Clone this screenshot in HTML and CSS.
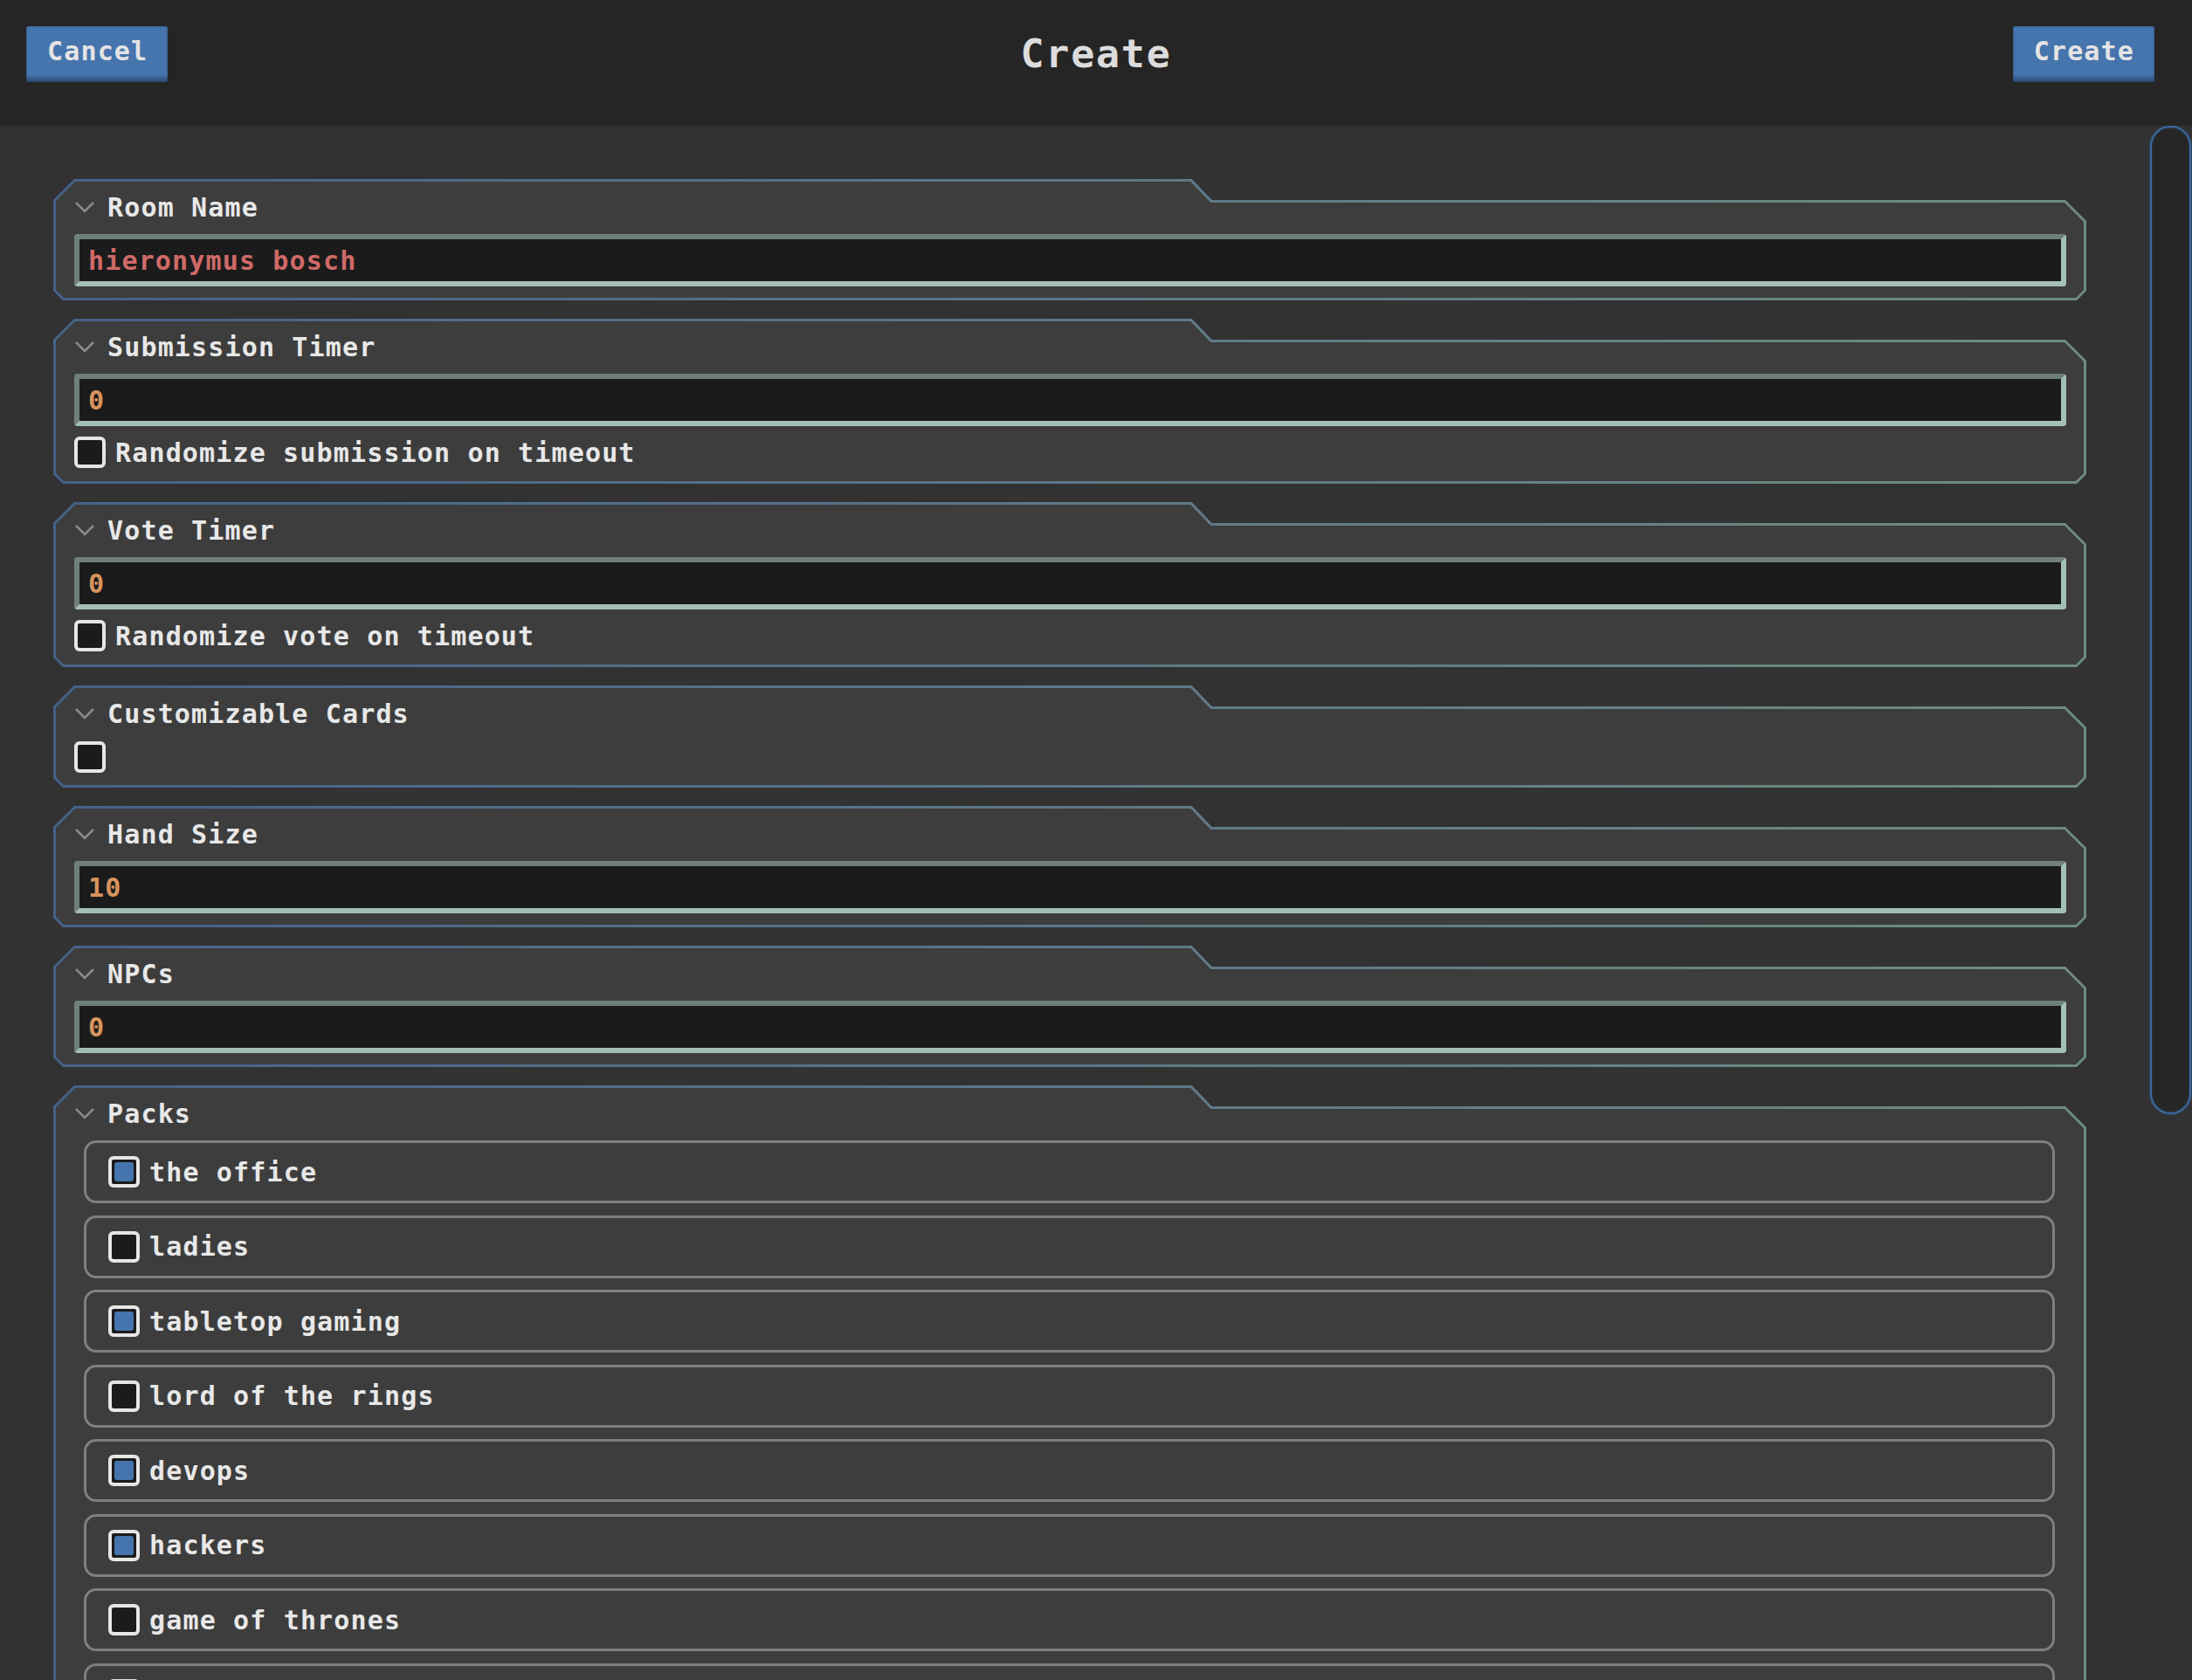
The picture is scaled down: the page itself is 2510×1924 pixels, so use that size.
FILE: index.html
```html
<!DOCTYPE html>
<html lang="en">
<head>
<meta charset="utf-8">
<title>Create</title>
<link rel="stylesheet" href="styles.css">
</head>
<body>
<header class="topbar">
  <button class="btn btn-cancel">Cancel</button>
  <h1 class="title">Create</h1>
  <button class="btn btn-create">Create</button>
</header>
<div class="main">
  <div class="content">
    <section class="card">
      <div class="card-body">
        <div class="card-head"><svg class="chev" viewBox="0 0 24 14"><polyline points="2,2 12,12 22,2"/></svg><span>Room Name</span></div>
        <input class="field field-text" type="text" value="hieronymus bosch">
      </div>
    </section>
    <section class="card">
      <div class="card-body">
        <div class="card-head"><svg class="chev" viewBox="0 0 24 14"><polyline points="2,2 12,12 22,2"/></svg><span>Submission Timer</span></div>
        <input class="field field-num" type="text" value="0">
        <label class="check"><span class="box"></span><span>Randomize submission on timeout</span></label>
      </div>
    </section>
    <section class="card">
      <div class="card-body">
        <div class="card-head"><svg class="chev" viewBox="0 0 24 14"><polyline points="2,2 12,12 22,2"/></svg><span>Vote Timer</span></div>
        <input class="field field-num" type="text" value="0">
        <label class="check"><span class="box"></span><span>Randomize vote on timeout</span></label>
      </div>
    </section>
    <section class="card">
      <div class="card-body">
        <div class="card-head"><svg class="chev" viewBox="0 0 24 14"><polyline points="2,2 12,12 22,2"/></svg><span>Customizable Cards</span></div>
        <label class="check check-solo"><span class="box"></span></label>
      </div>
    </section>
    <section class="card">
      <div class="card-body">
        <div class="card-head"><svg class="chev" viewBox="0 0 24 14"><polyline points="2,2 12,12 22,2"/></svg><span>Hand Size</span></div>
        <input class="field field-num" type="text" value="10">
      </div>
    </section>
    <section class="card">
      <div class="card-body">
        <div class="card-head"><svg class="chev" viewBox="0 0 24 14"><polyline points="2,2 12,12 22,2"/></svg><span>NPCs</span></div>
        <input class="field field-num" type="text" value="0">
      </div>
    </section>
    <section class="card">
      <div class="card-body">
        <div class="card-head"><svg class="chev" viewBox="0 0 24 14"><polyline points="2,2 12,12 22,2"/></svg><span>Packs</span></div>
        <div class="packs">
          <label class="pack"><span class="box on"></span><span>the office</span></label>
          <label class="pack"><span class="box"></span><span>ladies</span></label>
          <label class="pack"><span class="box on"></span><span>tabletop gaming</span></label>
          <label class="pack"><span class="box"></span><span>lord of the rings</span></label>
          <label class="pack"><span class="box on"></span><span>devops</span></label>
          <label class="pack"><span class="box on"></span><span>hackers</span></label>
          <label class="pack"><span class="box"></span><span>game of thrones</span></label>
          <label class="pack"><span class="box"></span><span>star wars</span></label>
        </div>
      </div>
    </section>
  </div>
  <div class="scroll-track"><div class="scroll-thumb"></div></div>
</div>
</body>
</html>
```
FILE: styles.css
```css
* { box-sizing: border-box; }
html, body { margin: 0; height: 100%; }
body {
  background: #323232;
  color: #e6e6e6;
  font-family: "DejaVu Sans Mono", monospace;
  overflow: hidden;
}

.topbar {
  height: 144px;
  background: #252525;
  display: grid;
  grid-template-columns: 1fr auto 1fr;
  align-items: start;
  padding: 30px 30px 0;
}
.btn {
  height: 64px;
  padding: 0 23px 6px 24px;
  background: #4674ad;
  color: #e4e4e4;
  border: none;
  border-radius: 2px;
  font-family: "DejaVu Sans Mono", monospace;
  font-weight: bold;
  font-size: 30px;
  letter-spacing: 1.15px;
  line-height: 1;
  box-shadow: inset 0 -7px 4px -2px rgba(0,0,0,0.3), inset 0 0 2px rgba(0,0,0,0.35);
  display: flex;
  align-items: center;
}
.btn-cancel { justify-self: start; }
.btn-create { justify-self: end; margin-right: 13px; }
.title {
  margin: 0;
  height: 62px;
  display: flex;
  align-items: center;
  font-size: 45px;
  font-weight: bold;
  letter-spacing: 1.75px;
  color: #dcdcdc;
}

.main { display: flex; height: 1780px; overflow: hidden; }
.content {
  flex: 1;
  min-width: 0;
  padding: 61px 61px 0;
  display: flex;
  flex-direction: column;
  gap: 21px;
}
.scroll-track { width: 60px; flex-shrink: 0; padding-left: 12px; }
.scroll-thumb {
  width: 47px;
  height: 1132px;
  border: 2px solid #3b6aa5;
  border-radius: 24px;
  background: #262626;
  box-shadow: 0 0 3px rgba(70,116,173,0.6), inset 0 0 3px rgba(70,116,173,0.4);
}

.card {
  flex-shrink: 0;
  padding: 3px;
  background: linear-gradient(90deg, #45628a 0%, #5d7788 50%, #6f8c80 100%);
  clip-path: polygon(0 24px, 24px 0, 56% 0, calc(56% + 23px) 24px, calc(100% - 24px) 24px, 100% 48px, 100% calc(100% - 11px), calc(100% - 11px) 100%, 11px 100%, 0 calc(100% - 11px));
}
.card-body {
  background: #3d3d3d;
  clip-path: polygon(0 22px, 22px 0, calc(56% - 1px) 0, calc(56% + 22px) 24px, calc(100% - 22px) 24px, 100% 46px, 100% calc(100% - 9px), calc(100% - 9px) 100%, 9px 100%, 0 calc(100% - 9px));
  padding: 9px 20px 13px 21px;
  display: flex;
  flex-direction: column;
  gap: 10px;
}
.card-head {
  display: flex;
  align-items: center;
  gap: 14px;
  height: 40px;
  margin-bottom: 1px;
  font-size: 30px;
  font-weight: bold;
  letter-spacing: 1.15px;
  color: #e8e8e8;
}
.chev { width: 24px; height: 14px; flex-shrink: 0; }
.chev polyline { fill: none; stroke: #8a8a8a; stroke-width: 2.5; }

.field {
  display: block;
  width: 100%;
  height: 60px;
  margin: 0;
  border: 6px solid;
  border-color: #6f8079 #a3c0b4 #a3c0b4 #6f8079;
  border-radius: 4px;
  background: #1b1b1b;
  padding: 0 10px;
  font-family: "DejaVu Sans Mono", monospace;
  font-size: 30px;
  font-weight: bold;
  letter-spacing: 1.15px;
  outline: none;
}
.field-text { color: #cf6a68; }
.field-num { color: #d8945e; }

.check {
  display: flex;
  align-items: center;
  gap: 11px;
  height: 40px;
  font-size: 30px;
  font-weight: bold;
  letter-spacing: 1.15px;
  color: #e8e8e8;
}
.check-solo { height: 38px; }
.box {
  width: 36px;
  height: 36px;
  flex-shrink: 0;
  border: 4px solid #e6e6e6;
  border-radius: 6px;
  background: #1b1b1b;
  display: flex;
  align-items: center;
  justify-content: center;
}
.box.on::after {
  content: "";
  width: 22px;
  height: 22px;
  border-radius: 3px;
  background: #4674ad;
}

.packs {
  display: flex;
  flex-direction: column;
  gap: 13.5px;
  margin: 0 13px 0 11px;
}
.pack {
  height: 72px;
  flex-shrink: 0;
  border: 3px solid #7f7f7f;
  border-radius: 14px;
  display: flex;
  align-items: center;
  gap: 11px;
  padding: 0 25px;
  font-size: 30px;
  font-weight: bold;
  letter-spacing: 1.15px;
  color: #e8e8e8;
}
```
